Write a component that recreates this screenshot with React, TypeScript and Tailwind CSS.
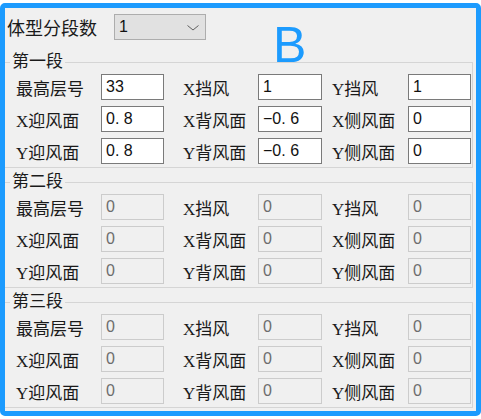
import React from "react";

const LABEL_FONT = "font-['Liberation_Serif','Noto_Sans_CJK_SC',serif]";

type Cell = { label: string; value: string };

function Field({ value, enabled }: { value: string; enabled: boolean }) {
  return (
    <div
      className={
        "h-[26px] pl-[4px] pt-[3px] text-[16px] leading-[18px] font-['Liberation_Sans',sans-serif] whitespace-pre border " +
        (enabled
          ? "bg-white border-[#7a7a7a] text-[#111]"
          : "bg-[#f0f0f0] border-[#cccccc] text-[#6d6d6d]")
      }
    >
      {value}
    </div>
  );
}

function Label({ text, pl }: { text: string; pl: string }) {
  return (
    <div
      className={
        "h-[26px] pt-[6px] leading-[20px] text-[17px] text-[#1a1a1a] whitespace-nowrap " +
        LABEL_FONT +
        " " +
        pl
      }
    >
      {text}
    </div>
  );
}

function Group({
  title,
  rows,
  enabled,
  className,
}: {
  title: string;
  rows: Cell[][];
  enabled: boolean;
  className?: string;
}) {
  return (
    <fieldset
      className={
        "border-t border-r border-b border-l-0 border-[#d5d5d5] mr-[3px] pt-[3px] pb-[3px] " +
        (className ?? "")
      }
    >
      <legend
        className={
          "ml-[5px] px-[2px] text-[17px] leading-[18px] text-[#1a1a1a] " +
          LABEL_FONT
        }
      >
        {title}
      </legend>
      <div className="grid grid-cols-[96px_63px_94px_64px_86px_63px] gap-y-[6px]">
        {rows.map((row, ri) => (
          <React.Fragment key={ri}>
            <Label text={row[0].label} pl="pl-[11px]" />
            <Field value={row[0].value} enabled={enabled} />
            <Label text={row[1].label} pl="pl-[19px]" />
            <Field value={row[1].value} enabled={enabled} />
            <Label text={row[2].label} pl="pl-[10px]" />
            <Field value={row[2].value} enabled={enabled} />
          </React.Fragment>
        ))}
      </div>
    </fieldset>
  );
}

export default function App() {
  const g1: Cell[][] = [
    [
      { label: "最高层号", value: "33" },
      { label: "X挡风", value: "1" },
      { label: "Y挡风", value: "1" },
    ],
    [
      { label: "X迎风面", value: "0. 8" },
      { label: "X背风面", value: "−0. 6" },
      { label: "X侧风面", value: "0" },
    ],
    [
      { label: "Y迎风面", value: "0. 8" },
      { label: "Y背风面", value: "−0. 6" },
      { label: "Y侧风面", value: "0" },
    ],
  ];
  const g0: Cell[][] = [
    [
      { label: "最高层号", value: "0" },
      { label: "X挡风", value: "0" },
      { label: "Y挡风", value: "0" },
    ],
    [
      { label: "X迎风面", value: "0" },
      { label: "X背风面", value: "0" },
      { label: "X侧风面", value: "0" },
    ],
    [
      { label: "Y迎风面", value: "0" },
      { label: "Y背风面", value: "0" },
      { label: "Y侧风面", value: "0" },
    ],
  ];

  return (
    <div className="w-[481px] h-[419px] bg-white pt-[3px] overflow-hidden">
      <div className="relative h-[413px] border-[5px] border-[#1c9bfe] rounded-[5px] bg-[#f0f0f0]">
        <div className="flex items-center mt-[6px] h-[26px]">
          <div className="w-[109px] pl-[2px] text-[18px] leading-[22px] text-[#1a1a1a] font-['Noto_Sans_CJK_SC',sans-serif] whitespace-nowrap">
            体型分段数
          </div>
          <div className="w-[92px] h-[26px] bg-[#e1e1e1] border border-[#adadad] flex items-center justify-between pl-[4px] pr-[6px]">
            <span className="text-[16px] leading-[18px] text-[#111] font-['Liberation_Sans',sans-serif]">
              1
            </span>
            <svg width="12" height="6" viewBox="0 0 12 6" className="mt-[1px]">
              <path d="M0.5 0.5 L6 5 L11.5 0.5" fill="none" stroke="#606060" strokeWidth="1" />
            </svg>
          </div>
        </div>

        <div className="absolute left-[268px] top-[9px] text-[50px] leading-[56px] text-[#1c9bfe] font-['Liberation_Sans',sans-serif]">
          B
        </div>

        <Group title="第一段" rows={g1} enabled className="mt-[13px]" />
        <Group title="第二段" rows={g0} enabled={false} className="mt-[5px]" />
        <Group title="第三段" rows={g0} enabled={false} className="mt-[5px]" />
      </div>
    </div>
  );
}
